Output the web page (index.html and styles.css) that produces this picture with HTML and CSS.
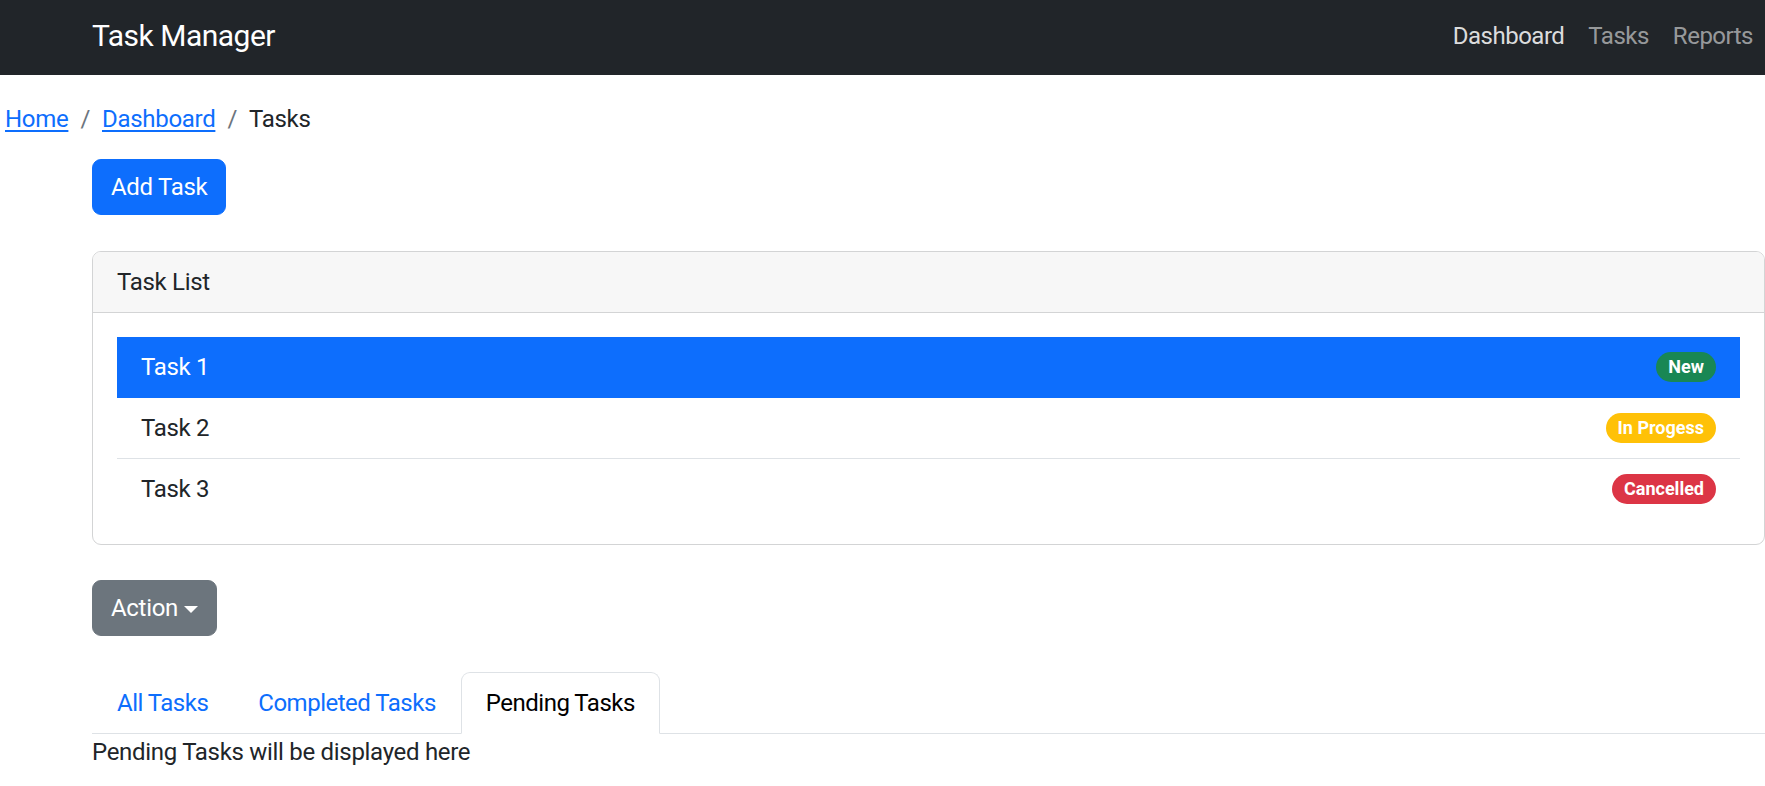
FILE: index.html
```html
<!DOCTYPE html>
<html lang="en">
<head>
<meta charset="utf-8">
<title>Task Manager</title>
<link rel="stylesheet" href="styles.css">
</head>
<body>
<nav class="navbar">
  <a class="brand" href="#">Task Manager</a>
  <ul class="nav-links">
    <li><a class="nav-link active" href="#">Dashboard</a></li>
    <li><a class="nav-link" href="#">Tasks</a></li>
    <li><a class="nav-link" href="#">Reports</a></li>
  </ul>
</nav>
<ol class="breadcrumb">
  <li><a href="#">Home</a></li>
  <li class="sep">/</li>
  <li><a href="#">Dashboard</a></li>
  <li class="sep">/</li>
  <li class="current">Tasks</li>
</ol>
<main class="content">
  <div><button class="btn btn-primary">Add Task</button></div>
  <section class="card">
    <header class="card-header">Task List</header>
    <div class="card-body">
      <ul class="list-group">
        <li class="list-item active"><span>Task 1</span><span class="badge badge-success">New</span></li>
        <li class="list-item"><span>Task 2</span><span class="badge badge-warning">In Progess</span></li>
        <li class="list-item"><span>Task 3</span><span class="badge badge-danger">Cancelled</span></li>
      </ul>
    </div>
  </section>
  <div class="dropdown"><button class="btn btn-secondary">Action<span class="caret"></span></button></div>
  <ul class="tabs">
    <li><a class="tab" href="#">All Tasks</a></li>
    <li><a class="tab" href="#">Completed Tasks</a></li>
    <li><a class="tab active" href="#">Pending Tasks</a></li>
  </ul>
  <div class="tab-pane">Pending Tasks will be displayed here</div>
</main>
</body>
</html>
```

FILE: styles.css
```css
* { box-sizing: border-box; }
html, body { margin: 0; padding: 0; }
body {
  font-family: Roboto, "Liberation Sans", sans-serif;
  font-size: 24px;
  line-height: 36px;
  letter-spacing: -0.3px;
  color: #212529;
  background: #fff;
}
a { text-decoration: none; }
ul, ol { list-style: none; margin: 0; padding: 0; }

.navbar {
  height: 75px;
  background: #212529;
  display: flex;
  align-items: center;
  justify-content: space-between;
  padding: 0 0 0 92px;
}
.brand {
  color: #fff;
  font-size: 30px;
  line-height: 45px;
  letter-spacing: -0.5px;
  margin-top: -4px;
}
.nav-links { display: flex; margin-top: -4px; }
.nav-link {
  display: block;
  padding: 0 12px;
  color: rgba(255,255,255,.55);
  letter-spacing: -0.5px;
}
.nav-link.active { color: rgba(255,255,255,.85); }

.breadcrumb {
  display: flex;
  margin: 26px 0 22px 0;
  padding: 0 0 0 5px;
}
.breadcrumb a { color: #0d6efd; text-decoration: underline; text-underline-offset: 3px; }
.breadcrumb .sep { color: #6c757d; padding: 0 12px; }
.breadcrumb .current { color: #212529; }

.content { padding: 0 0 0 92px; }

.btn {
  font-family: inherit;
  font-size: 24px;
  line-height: 36px;
  letter-spacing: -0.3px;
  padding: 9px 18px;
  border: 1px solid transparent;
  border-radius: 9px;
  color: #fff;
  cursor: pointer;
  display: inline-flex;
  align-items: center;
}
.btn-primary { background: #0d6efd; border-color: #0d6efd; }
.btn-secondary { background: #6c757d; border-color: #6c757d; }
.caret {
  display: inline-block;
  width: 0; height: 0;
  margin-left: 6px;
  border-top: 7px solid #fff;
  border-left: 7px solid transparent;
  border-right: 7px solid transparent;
  margin-top: 2px;
}

.card {
  margin-top: 36px;
  width: 1673px;
  border: 1px solid #d3d4d5;
  border-radius: 9px;
  overflow: hidden;
}
.card-header {
  background: #f7f7f7;
  padding: 12px 24px;
  border-bottom: 1px solid #d3d4d5;
}
.card-body { padding: 24px; }
.list-item {
  display: flex;
  justify-content: space-between;
  align-items: center;
  padding: 12px 24px;
  border-bottom: 1px solid #dee2e6;
}
.list-item:last-child { border-bottom: 0; padding-bottom: 13px; }
.list-item.active { background: #0d6efd; color: #fff; border-bottom-color: #0d6efd; }

.badge {
  font-size: 18px;
  line-height: 18px;
  font-weight: 700;
  letter-spacing: 0;
  color: #fff;
  padding: 6px 12px;
  border-radius: 50px;
}
.badge-success { background: #198754; }
.badge-warning { background: #ffc107; }
.badge-danger { background: #dc3545; }

.dropdown { margin-top: 35px; }

.tabs {
  margin-top: 36px;
  display: flex;
  border-bottom: 1px solid #dee2e6;
}
.tab {
  display: block;
  padding: 12px 24px;
  color: #0d6efd;
  letter-spacing: -0.5px;
  border: 1px solid transparent;
  border-top-left-radius: 9px;
  border-top-right-radius: 9px;
  margin-bottom: -1px;
}
.tab.active {
  color: #000;
  background: #fff;
  border-color: #dee2e6 #dee2e6 #fff;
}
.tab-pane { color: #212529; }
```
